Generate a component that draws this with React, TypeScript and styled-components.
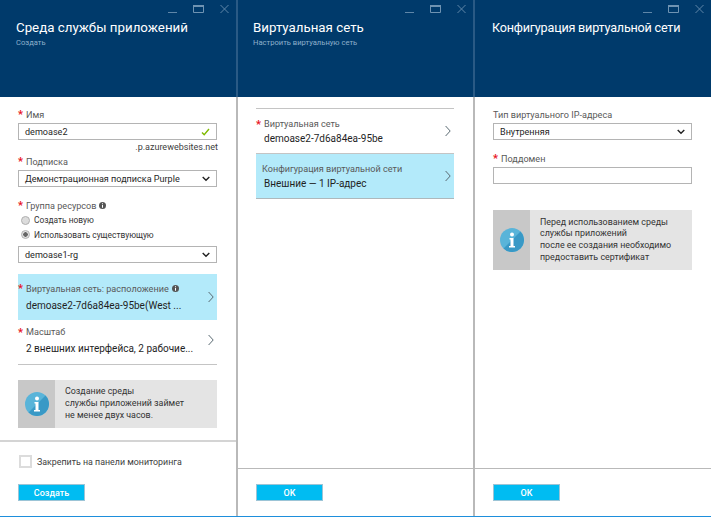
import React from 'react';
import styled, { createGlobalStyle } from 'styled-components';

const GlobalStyle = createGlobalStyle`
  html, body {
    margin: 0;
    padding: 0;
    background: #fff;
  }
  body {
    font-family: Roboto, 'Open Sans', sans-serif;
    overflow: hidden;
  }
`;

const Page = styled.div`
  display: grid;
  grid-template-columns: 238px 237px 236px;
  width: 711px;
  height: 517px;
  box-sizing: border-box;
  border-bottom: 1px solid #1e8fdc;
`;

const Blade = styled.section`
  display: flex;
  flex-direction: column;
  min-width: 0;
  height: 516px;
  box-sizing: border-box;
  border-right: 2px solid #b9b9b9;
  &:last-child {
    border-right: 0;
  }
`;

const Header = styled.header<{ $inset?: number }>`
  position: relative;
  height: 97px;
  flex: none;
  box-sizing: border-box;
  margin-right: -2px;
  padding: 18px 0 0 ${({ $inset }) => $inset ?? 16}px;
  background: #003a6b;
  border-right: 2px solid #2a5a85;
  color: #fff;
`;

const Title = styled.h1<{ $size: number; $track?: number }>`
  margin: 0;
  font-size: ${({ $size }) => $size}px;
  line-height: 20px;
  font-weight: 400;
  letter-spacing: ${({ $track }) => $track ?? 0}px;
  white-space: nowrap;
`;

const Subtitle = styled.div`
  margin-top: -1px;
  font-size: 7.6px;
  line-height: 11px;
  color: #8eb0cc;
`;

const WindowControls = styled.svg`
  position: absolute;
  top: 3px;
  right: 6px;
`;

const Body = styled.div`
  flex: 1;
  min-height: 0;
  padding: 11px 19px 0 18px;
`;

const Footer = styled.footer`
  flex: none;
  height: 76px;
  box-sizing: border-box;
  padding: 13px 18px 0;
  border-top: 2px solid #d4d4d4;
`;

const ShortFooter = styled(Footer)`
  height: 48px;
  padding-top: 15px;
  border-top: 1px solid #b9b9b9;
`;

const Label = styled.div<{ $gap?: number }>`
  display: flex;
  align-items: center;
  height: 13px;
  margin-top: ${({ $gap }) => $gap ?? 0}px;
  font-size: 9.1px;
  color: #595959;
  white-space: nowrap;
`;

const Star = styled.span`
  width: 8px;
  color: #e81123;
  font-size: 11px;
  line-height: 13px;
  font-weight: 700;
`;

const Field = styled.div`
  display: flex;
  align-items: center;
  justify-content: space-between;
  height: 17px;
  box-sizing: border-box;
  margin-top: 2px;
  padding: 0 6px;
  border: 1px solid #b4b4b4;
  background: #fff;
  font-size: 9.05px;
  color: #1f1f1f;
  white-space: nowrap;
`;

const Hint = styled.div`
  height: 13px;
  margin-top: 1px;
  margin-bottom: 1px;
  margin-right: -1px;
  font-size: 9px;
  line-height: 13px;
  color: #404040;
  text-align: right;
`;

const RadioRow = styled.div`
  display: flex;
  align-items: center;
  gap: 4px;
  height: 14.5px;
  margin-left: 3px;
  font-size: 8.4px;
  color: #333;
`;

const RadioDot = styled.span<{ $checked?: boolean }>`
  width: 9px;
  height: 9px;
  box-sizing: border-box;
  border-radius: 50%;
  border: 1px solid #b0b0b0;
  background: ${({ $checked }) =>
    $checked ? 'radial-gradient(circle, #666 0 2px, #e2e2e2 2.5px)' : '#dcdcdc'};
`;

const Selector = styled.div<{ $active?: boolean; $height: number; $ruled?: boolean; $lift?: number }>`
  display: flex;
  align-items: center;
  justify-content: space-between;
  height: ${({ $height }) => $height}px;
  box-sizing: border-box;
  padding: 0 3px ${({ $lift }) => $lift ?? 0}px 0;
  background: ${({ $active }) => ($active ? '#b3eafa' : '#fff')};
  border-bottom: ${({ $ruled, $active }) =>
    $ruled ? `1px solid ${$active ? '#aeb8bc' : '#c4c4c4'}` : '0'};
`;

const SelectorText = styled.div<{ $inset?: number }>`
  min-width: 0;
  padding-left: ${({ $inset }) => $inset ?? 0}px;
`;

const SelectorValue = styled.div<{ $indent?: number; $top?: number }>`
  margin-top: ${({ $top }) => $top ?? 4}px;
  padding-left: ${({ $indent }) => $indent ?? 8}px;
  font-size: 10px;
  line-height: 13px;
  color: #1f1f1f;
  white-space: nowrap;
`;

const SelectorList = styled.div`
  border-top: 1px solid #c4c4c4;
`;

const Notice = styled.div<{ $height: number; $gap: number }>`
  display: grid;
  grid-template-columns: 37px 1fr;
  height: ${({ $height }) => $height}px;
  margin-top: ${({ $gap }) => $gap}px;
  background: #e4e4e4;
`;

const NoticeIcon = styled.div`
  display: flex;
  align-items: center;
  justify-content: center;
  background: #c8c8c8;
`;

const NoticeText = styled.div`
  align-self: center;
  padding-left: 10px;
  font-size: 8.9px;
  line-height: 11.7px;
  color: #333;
  white-space: nowrap;
`;

const PinRow = styled.label`
  display: flex;
  align-items: center;
  gap: 5px;
  height: 13px;
  margin-left: 1px;
  font-size: 8.85px;
  color: #404040;
`;

const PinBox = styled.span`
  width: 13px;
  height: 13px;
  box-sizing: border-box;
  border: 2px solid #dcdcdc;
  background: #fff;
`;

const Button = styled.button<{ $gap?: number }>`
  display: block;
  width: 67px;
  height: 17px;
  margin-top: ${({ $gap }) => $gap ?? 0}px;
  padding: 0;
  border: 1px solid #9cc4d6;
  background: #00bcf2;
  color: #fff;
  font-family: inherit;
  font-size: 9px;
  font-weight: 500;
  line-height: 14px;
`;

const Spacer = styled.div<{ $height: number }>`
  height: ${({ $height }) => $height}px;
`;

const Controls = () => (
  <WindowControls width="64" height="14" viewBox="0 0 64 14" fill="none" aria-hidden="true">
    <path d="M2 9.500h9" stroke="#5f86a8" strokeWidth="1" />
    <path d="M27.500 3v6.500h10V3z" stroke="#6f93b2" strokeWidth="1" />
    <path d="M27 3h11" stroke="#6f93b2" strokeWidth="2" />
    <path d="M54.500 2l8 8M62.500 2l-8 8" stroke="#5f86a8" strokeWidth="1" />
  </WindowControls>
);

const CheckIcon = () => (
  <svg width="9" height="8" viewBox="0 0 9 8" fill="none" aria-hidden="true">
    <path d="M1 4.500l2.200 2.300L8 1" stroke="#7fba00" strokeWidth="1.400" />
  </svg>
);

const SelectChevron = () => (
  <svg width="8" height="6" viewBox="0 0 8 6" fill="none" aria-hidden="true">
    <path d="M.7 1l3.300 3.300L7.300 1" stroke="#222" strokeWidth="1.400" />
  </svg>
);

const RowChevron = () => (
  <svg width="6" height="12" viewBox="0 0 6 12" fill="none" aria-hidden="true">
    <path d="M.6 1l4.600 5-4.600 5" stroke="#5a6a72" strokeWidth="1" />
  </svg>
);

const HelpIcon = () => (
  <svg width="7" height="7" viewBox="0 0 7 7" style={{ marginLeft: 3 }} aria-hidden="true">
    <circle cx="3.500" cy="3.500" r="3.500" fill="#555" />
    <path d="M3 1.200h1v1H3zM3 3h1v2.800H3z" fill="#fff" />
  </svg>
);

const InfoIcon = () => (
  <svg width="24" height="24" viewBox="0 0 24 24" aria-hidden="true">
    <circle cx="12" cy="12" r="12" fill="#59b4d9" />
    <path d="M20.500 3.500A12 12 0 0 1 3.500 20.500z" fill="#3999c6" />
    <circle cx="12" cy="6.500" r="2" fill="#fff" />
    <path d="M9.500 10h4v8H15v1.500H9V18h1.500v-6.500h-1z" fill="#fff" />
  </svg>
);

export default function App() {
  return (
    <>
      <GlobalStyle />
      <Page>
        <Blade>
          <Header>
            <Controls />
            <Title $size={13.3}>Среда службы приложений</Title>
            <Subtitle>Создать</Subtitle>
          </Header>
          <Body>
            <Label><Star>*</Star>Имя</Label>
            <Field>demoase2<CheckIcon /></Field>
            <Hint>.p.azurewebsites.net</Hint>
            <Label><Star>*</Star>Подписка</Label>
            <Field>Демонстрационная подписка Purple<SelectChevron /></Field>
            <Label $gap={12}><Star>*</Star>Группа ресурсов<HelpIcon /></Label>
            <Spacer $height={1} />
            <RadioRow><RadioDot />Создать новую</RadioRow>
            <RadioRow><RadioDot $checked />Использовать существующую</RadioRow>
            <Spacer $height={2} />
            <Field>demoase1-rg<SelectChevron /></Field>
            <Spacer $height={11} />
            <Selector $active $height={46}>
              <SelectorText>
                <Label><Star>*</Star>Виртуальная сеть: расположение<HelpIcon /></Label>
                <SelectorValue>demoase2-7d6a84ea-95be(West ...</SelectorValue>
              </SelectorText>
              <RowChevron />
            </Selector>
            <Selector $height={45} $ruled $lift={4}>
              <SelectorText>
                <Label><Star>*</Star>Масштаб</Label>
                <SelectorValue $top={3}>2 внешних интерфейса, 2 рабочие...</SelectorValue>
              </SelectorText>
              <RowChevron />
            </Selector>
            <Notice $height={48} $gap={15}>
              <NoticeIcon><InfoIcon /></NoticeIcon>
              <NoticeText>
                Создание среды<br />
                службы приложений займет<br />
                не менее двух часов.
              </NoticeText>
            </Notice>
          </Body>
          <Footer>
            <PinRow><PinBox />Закрепить на панели мониторинга</PinRow>
            <Button $gap={16}>Создать</Button>
          </Footer>
        </Blade>

        <Blade>
          <Header $inset={15}>
            <Controls />
            <Title $size={13.3}>Виртуальная сеть</Title>
            <Subtitle>Настроить виртуальную сеть</Subtitle>
          </Header>
          <Body>
            <SelectorList>
              <Selector $height={44}>
                <SelectorText>
                  <Label><Star>*</Star>Виртуальная сеть</Label>
                  <SelectorValue $top={1}>demoase2-7d6a84ea-95be</SelectorValue>
                </SelectorText>
                <RowChevron />
              </Selector>
              <SelectorList>
                <Selector $active $ruled $height={45}>
                  <SelectorText $inset={6}>
                    <Label>Конфигурация виртуальной сети</Label>
                    <SelectorValue $indent={2} $top={2}>Внешние — 1 IP-адрес</SelectorValue>
                  </SelectorText>
                  <RowChevron />
                </Selector>
              </SelectorList>
            </SelectorList>
          </Body>
          <ShortFooter>
            <Button>OK</Button>
          </ShortFooter>
        </Blade>

        <Blade>
          <Header $inset={17}>
            <Controls />
            <Title $size={12.6} $track={-0.2}>Конфигурация виртуальной сети</Title>
          </Header>
          <Body>
            <Label>Тип виртуального IP-адреса</Label>
            <Field>Внутренняя<SelectChevron /></Field>
            <Label $gap={12}><Star>*</Star>Поддомен</Label>
            <Field />
            <Notice $height={60} $gap={26}>
              <NoticeIcon><InfoIcon /></NoticeIcon>
              <NoticeText>
                Перед использованием среды<br />
                службы приложений<br />
                после ее создания необходимо<br />
                предоставить сертификат
              </NoticeText>
            </Notice>
          </Body>
          <ShortFooter>
            <Button>OK</Button>
          </ShortFooter>
        </Blade>
      </Page>
    </>
  );
}
